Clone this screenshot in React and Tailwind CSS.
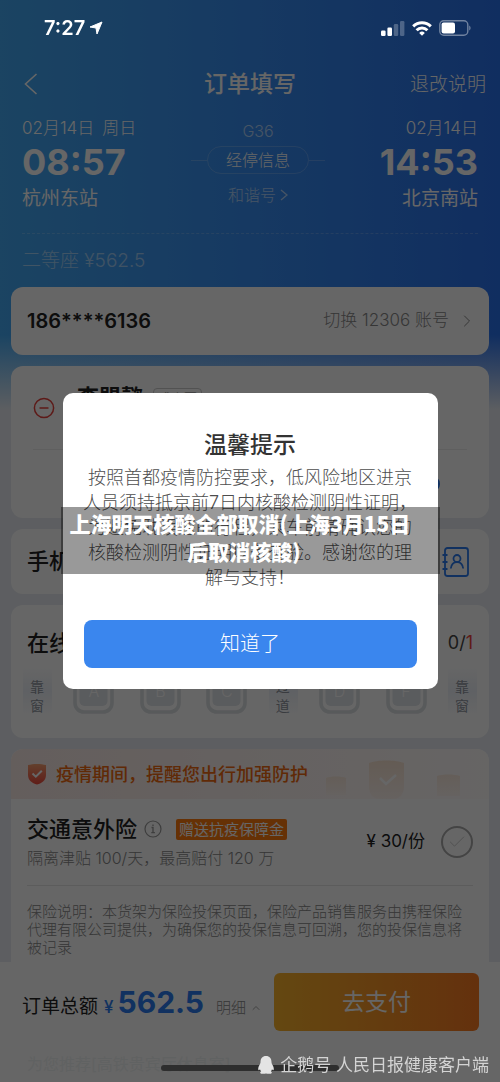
import { ChevronRight, ChevronUp, Check } from "lucide-react";

const seatColumns = [
  { type: "label", text: "靠窗" },
  { type: "seat", text: "A" },
  { type: "seat", text: "B" },
  { type: "seat", text: "C" },
  { type: "label", text: "过道" },
  { type: "seat", text: "D" },
  { type: "seat", text: "F" },
  { type: "label", text: "靠窗" },
];

const noticeLines = [
  "按照首都疫情防控要求，低风险地区进京",
  "人员须持抵京前7日内核酸检测阴性证明，",
  "为避免耽误您的行程，乘车前请确认您的",
  "核酸检测阴性证明以备查验。感谢您的理",
  "解与支持！",
];

function StatusBar() {
  return (
    <div className="relative z-20 flex h-14 items-center justify-between pr-[29px] pl-11 text-white">
      <div className="flex items-center gap-1">
        <span className="text-[20px] font-semibold">7:27</span>
        <svg viewBox="0 0 14 14" className="size-3.5" fill="currentColor" stroke="currentColor" strokeLinejoin="round">
          <path d="M13 1 8 13 7 7 1 6z" />
        </svg>
      </div>
      <div className="flex items-center gap-[7px]">
        <svg viewBox="0 0 24 15" className="h-[15px] w-6" fill="currentColor">
          <rect x="0" y="9.5" width="4.6" height="5.5" rx="1.2" />
          <rect x="6.4" y="6.5" width="4.6" height="8.5" rx="1.2" />
          <rect x="12.8" y="3" width="4.4" height="12" rx="1.2" opacity=".25" />
          <rect x="19" y="0" width="4.4" height="15" rx="1.2" opacity=".25" />
        </svg>
        <svg viewBox="0 0 20 15" className="h-[15px] w-5" fill="none" stroke="currentColor" strokeWidth="3">
          <path d="M1.2 5.4a12.5 12.5 0 0 1 17.6 0" />
          <path d="M4.6 9.2a7.7 7.7 0 0 1 10.8 0" />
          <path d="m10 14.8-2.8-2.9a4.1 4.1 0 0 1 5.6 0z" fill="currentColor" stroke="none" />
        </svg>
        <svg viewBox="0 0 32 16" className="h-4 w-8" fill="none">
          <rect x=".8" y=".8" width="28" height="14.4" rx="4" stroke="#fff" strokeOpacity=".4" strokeWidth="1.4" />
          <rect x="2.6" y="2.6" width="13.4" height="10.8" rx="2" fill="#fff" />
          <path d="M30.3 5.5c1.6.8 1.6 4.2 0 5z" fill="#fff" fillOpacity=".45" />
        </svg>
      </div>
    </div>
  );
}

function TripHeader() {
  return (
    <header className="text-white">
      <div className="grid h-14 grid-cols-[1fr_auto_1fr] items-center px-3.5">
        <button type="button" aria-label="返回" className="justify-self-start px-2.5">
          <svg viewBox="0 0 14 22" className="h-[22px] w-3.5" fill="none" stroke="currentColor" strokeWidth="1.6">
            <path d="M12.5 1 1.5 11l11 10" />
          </svg>
        </button>
        <h1 className="text-[23px] font-medium">订单填写</h1>
        <a href="#rules" className="justify-self-end pt-0.5 text-[19px] font-light">
          退改说明
        </a>
      </div>

      <div className="mx-[22px] flex justify-between border-b border-dashed border-white/20 pt-1 pb-5">
        <div>
          <p className="flex gap-2 text-[17px] leading-6 font-light">
            <span>02月14日</span>
            <span>周日</span>
          </p>
          <p className="text-[36px] leading-[45px] font-bold">08:57</p>
          <p className="text-[19px] leading-7">杭州东站</p>
        </div>
        <div className="flex flex-col items-center">
          <p className="text-base leading-[30px] font-light opacity-60">G36</p>
          <div className="flex items-center">
            <span className="h-px w-4 bg-white/20" />
            <button
              type="button"
              className="h-7 rounded-full border border-white/20 px-[18px] text-base font-light"
            >
              经停信息
            </button>
            <span className="h-px w-4 bg-white/20" />
          </div>
          <a href="#train" className="mt-2 flex items-center gap-1 text-base leading-[26px] font-light opacity-60">
            和谐号
            <svg viewBox="0 0 8 12" className="h-3 w-2" fill="none" stroke="currentColor" strokeWidth="1.4">
              <path d="m1 1 6 5-6 5" />
            </svg>
          </a>
        </div>
        <div className="text-right">
          <p className="text-[17px] leading-6 font-light">02月14日</p>
          <p className="text-[36px] leading-[45px] font-bold">14:53</p>
          <p className="text-[19px] leading-7">北京南站</p>
        </div>
      </div>
      <p className="px-[22px] pt-px text-[19px] leading-[52px] font-light opacity-50">二等座 ¥562.5</p>
    </header>
  );
}

function Seat({ letter }) {
  return (
    <button type="button" className="relative mx-1 h-[46px] w-[41px] text-base font-light text-white">
      <svg viewBox="0 0 41 46" className="absolute inset-0 size-full" fill="none">
        <path d="M2 18v17a9 9 0 0 0 9 9h19a9 9 0 0 0 9-9V18" stroke="#dde0e4" strokeWidth="3.6" strokeLinecap="round" />
        <rect x="6.5" y="2" width="28" height="36" rx="5" fill="#e2e5ea" />
      </svg>
      <span className="relative">{letter}</span>
    </button>
  );
}

function Insurance() {
  return (
    <section className="flex-1 overflow-hidden rounded-t-xl bg-white">
      <div className="flex h-[50px] items-center bg-linear-to-r from-[#fbebe7] to-[#fffcfb] pl-4">
        <svg viewBox="0 0 20 22" className="h-[22px] w-5" fill="none">
          <defs>
            <linearGradient id="shield" x1="0" y1="0" x2="0" y2="1">
              <stop offset="0" stopColor="#f7a070" />
              <stop offset="1" stopColor="#f0483c" />
            </linearGradient>
          </defs>
          <path d="M1 2c5-1.5 13-1.5 18 0v10c0 5-4 8.5-9 9.5-5-1-9-4.5-9-9.5z" fill="url(#shield)" />
          <path d="m5.5 10.5 3.3 3.2 6-6" stroke="#fff" strokeWidth="2" />
        </svg>
        <p className="ml-[9px] text-[18px] font-medium text-[#f0690f]">疫情期间，提醒您出行加强防护</p>
        <svg viewBox="0 0 136 50" className="ml-[17px] h-[50px] w-[136px]" fill="none">
          <defs>
            <linearGradient id="fade" x1="0" y1="0" x2="0" y2="1">
              <stop offset="0" stopColor="#fae4d2" />
              <stop offset="1" stopColor="#fef4ef" />
            </linearGradient>
          </defs>
          <path d="M1 29c5-2 15-2 20 0v17H1z" fill="url(#fade)" opacity=".7" />
          <path d="M44 14c8-3.5 27-3.5 35 0v24c0 7-5 12-10 12H54c-6 0-10-5-10-12z" fill="url(#fade)" />
          <path d="m55 29 6 6 10-9" stroke="#fff" strokeWidth="2.5" />
          <path d="M112 27c6-2 17-2 23 0v20h-23z" fill="url(#fade)" opacity=".7" />
        </svg>
      </div>

      <div className="mx-4 flex items-center justify-between border-b border-[#e6e6e6] py-[14px]">
        <div>
          <div className="flex items-center leading-8">
            <h2 className="text-[22px] font-medium text-[#222]">交通意外险</h2>
            <svg viewBox="0 0 18 18" className="ml-[7px] size-[18px]" fill="none" stroke="#999">
              <circle cx="9" cy="9" r="8" strokeWidth="1.2" />
              <path d="M7.5 7.5H9v5M7.3 12.7h3.6M9 4.5v1.4" strokeWidth="1.3" />
            </svg>
            <span className="ml-3.5 rounded-xs bg-[#ff7a0e] px-[3px] text-[15px] leading-[21px] text-white">
              赠送抗疫保障金
            </span>
          </div>
          <p className="text-base leading-[26px] font-light text-[#888]">隔离津贴 100/天，最高赔付 120 万</p>
        </div>
        <label className="flex items-center gap-4 text-[17px] text-[#222]">
          ¥ 30/份
          <span className="relative grid size-8 place-items-center">
            <input
              type="checkbox"
              className="absolute inset-0 size-8 appearance-none rounded-full border-2 border-[#aaa]"
            />
            <Check className="relative size-5 text-[#ccc]" strokeWidth={1.2} />
          </span>
        </label>
      </div>

      <p className="mx-4 mt-[17px] mb-1 text-[15px] leading-[18px] font-light text-[#888]">
        保险说明：本货架为保险投保页面，保险产品销售服务由携程保险代理有限公司提供，为确保您的投保信息可回溯，您的投保信息将被记录
      </p>
    </section>
  );
}

function PayBar() {
  return (
    <footer className="bg-white">
      <div className="flex items-center pt-[11px] pr-[21px] pl-[22px]">
        <div className="flex items-baseline">
          <span className="text-[19px] text-[#222]">订单总额</span>
          <span className="ml-1.5 text-[17px] font-medium text-[#2b7cf0]">¥</span>
          <span className="ml-1 text-[30px] font-bold text-[#2b7cf0]">562.5</span>
          <button type="button" className="ml-3 flex items-center gap-1 text-[15px] font-light text-[#888]">
            明细
            <ChevronUp className="size-3" strokeWidth={1.5} />
          </button>
        </div>
        <button
          type="button"
          className="ml-3 h-[58px] flex-1 rounded-md bg-linear-to-r from-[#f9b32c] to-[#fb7a22] text-[23px] text-white"
        >
          去支付
        </button>
      </div>
      <p className="mt-4 px-[27px] text-base leading-[35px] text-[#f1f4f4]">为您推荐[高铁贵宾厅休息室]</p>
    </footer>
  );
}

function NoticeDialog() {
  return (
    <div className="fixed inset-0 z-10 flex items-center justify-center bg-black/60">
      <div
        role="dialog"
        aria-labelledby="notice-title"
        className="relative w-3/4 rounded-[10px] bg-white pt-[34px] pb-[21px] text-center"
      >
        <h2 id="notice-title" className="text-[23px] leading-9 font-medium text-[#333]">
          温馨提示
        </h2>
        <div className="mt-0.5 mb-[30px] text-[18px] leading-[25px] font-light text-[#4d4d4d]">
          {noticeLines.map((line) => (
            <p key={line} className="whitespace-nowrap">
              {line}
            </p>
          ))}
        </div>
        <div className="px-[21px]">
          <button type="button" className="h-12 w-full rounded-lg bg-[#3a86ee] text-[20px] font-light text-white">
            知道了
          </button>
        </div>
        <p className="absolute -inset-x-0.5 top-[114px] bg-black/40 pt-0.5 pr-5 pb-[9px] font-['Noto_Sans_CJK_SC',sans-serif] text-[21px] leading-7 font-black text-white">
          上海明天核酸全部取消(上海3月15日
          <br />
          <span className="pl-2">后取消核酸)</span>
        </p>
      </div>
    </div>
  );
}

export default function App() {
  return (
    <div className="relative flex min-h-screen flex-col bg-[linear-gradient(to_bottom,transparent_335px,#e8ecf2_410px),linear-gradient(to_right,#44aaf5,#388ff4_50%,#2a73f0)] font-['Inter','Noto_Sans_CJK_SC',sans-serif]">
      <StatusBar />
      <TripHeader />

      <main className="flex flex-1 flex-col gap-[11px] px-[11px]">
        <section className="flex h-[68px] items-center justify-between rounded-xl bg-white pr-3 pl-4">
          <span className="text-[20px] font-semibold text-[#222]">186****6136</span>
          <a href="#account" className="flex items-center gap-2 text-[17px] font-light text-[#888]">
            切换 12306 账号
            <ChevronRight className="size-5" strokeWidth={1.2} />
          </a>
        </section>

        <section className="h-[152px] rounded-xl bg-white px-[22px]">
          <div className="flex h-[84px] items-center border-b border-[#eee]">
            <button type="button" aria-label="删除乘客">
              <svg viewBox="0 0 22 22" className="size-[22px]" fill="none" stroke="#e8413c" strokeWidth="1.5">
                <circle cx="11" cy="11" r="9.6" />
                <path d="M6.5 11h9" />
              </svg>
            </button>
            <div className="mb-5 ml-[22px] flex items-center gap-2.5">
              <span className="text-[22px] font-bold text-[#222]">李盟懿</span>
              <span className="rounded-sm border border-[#ccc] px-1 text-[13px] leading-[18px] text-[#999]">成人票</span>
            </div>
          </div>
          <div className="flex h-[68px] items-center justify-end pr-[27px]">
            <span className="size-[18px] rounded-full border-2 border-[#2b7cf0]" />
          </div>
        </section>

        <section className="flex h-[65px] items-center justify-between rounded-xl bg-white pr-5 pl-4">
          <span className="text-[22px] font-medium text-[#222]">手机号</span>
          <button type="button" aria-label="通讯录">
            <svg viewBox="0 0 27 30" className="h-[30px] w-[27px]" fill="none" stroke="#2b7cf0" strokeWidth="1.8">
              <rect x="3" y="1" width="23" height="28" rx="2.5" />
              <path d="M.5 8h5M.5 15h5M.5 22h5" />
              <circle cx="15" cy="11.5" r="3.5" />
              <path d="M8.8 21.5c.4-4 3-6.5 6.2-6.5s5.8 2.5 6.2 6.5" />
            </svg>
          </button>
        </section>

        <section className="h-[133px] rounded-xl bg-white px-3 pt-[22px]">
          <div className="flex items-center justify-between px-1 leading-8">
            <h2 className="text-[22px] font-medium text-[#222]">在线选座</h2>
            <span className="text-[18px] text-[#444]">
              0/<span className="text-[#f0443c]">1</span>
            </span>
          </div>
          <div className="mt-2 flex items-center justify-between">
            {seatColumns.map((column, index) =>
              column.type === "seat" ? (
                <Seat key={index} letter={column.text} />
              ) : (
                <span
                  key={index}
                  className="w-[29px] bg-linear-to-b from-white via-[#eef2f9] to-white px-[7px] pt-[10px] text-[14px] leading-[19px] text-[#8f959f]"
                >
                  {column.text}
                </span>
              )
            )}
          </div>
        </section>

        <Insurance />
      </main>

      <PayBar />
      <NoticeDialog />

      {/* home indicator and publisher credit */}
      <div className="fixed inset-x-0 bottom-[11px] z-20 flex justify-center">
        <span className="h-1.5 w-[178px] rounded-full bg-[#2e2e2e]" />
      </div>
      <div className="fixed right-[11px] bottom-[5px] z-20 flex items-center gap-1.5 text-[#d4d4d4]">
        <svg viewBox="0 0 16 18" className="h-[18px] w-4" fill="#e4e4e4">
          <path d="M8 0c3.6 0 5.5 2.5 5.5 6 0 1.2.4 2 1.2 3.3.9 1.5 1.3 3.2 1 4.4-.3.9-1 .4-1.7-.4-.2.9-.6 1.7-1.2 2.3.8.4 1.2.8 1 1.3-.3.9-3.2 1-5.8.6-2.6.4-5.5.3-5.8-.6-.2-.5.2-.9 1-1.3-.6-.6-1-1.4-1.2-2.3-.7.8-1.4 1.3-1.7.4-.3-1.2.1-2.9 1-4.4C2.1 8 2.5 7.2 2.5 6 2.5 2.5 4.4 0 8 0z" />
        </svg>
        <span className="text-[17px] leading-6">企鹅号 人民日报健康客户端</span>
      </div>
    </div>
  );
}
